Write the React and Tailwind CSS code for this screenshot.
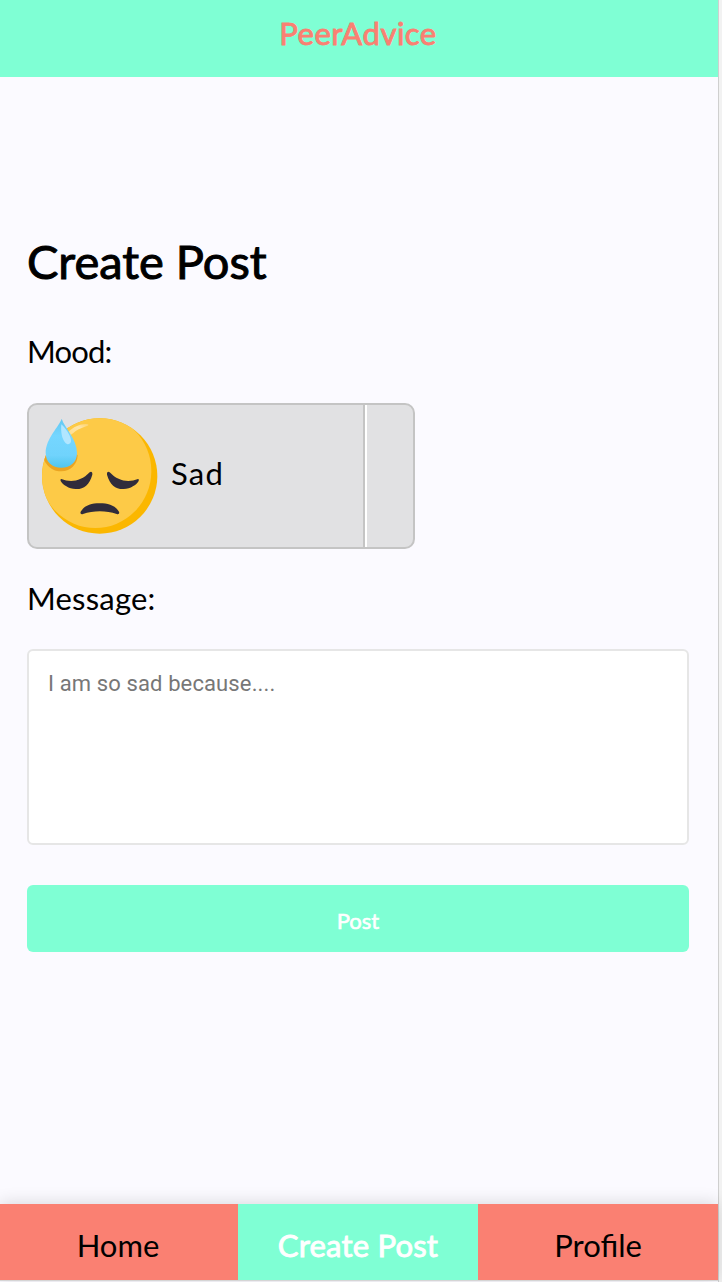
function SadFace() {
  return (
    <svg viewBox="63 66 354 354" className="size-[118px] shrink-0" aria-hidden="true">
      <defs>
        <linearGradient id="drop" x1="0" y1="0" x2="0" y2="1">
          <stop offset="0" stopColor="#62c8f2" />
          <stop offset="0.35" stopColor="#75d6ff" />
          <stop offset="0.75" stopColor="#70d3fc" />
          <stop offset="1" stopColor="#50c6ed" />
        </linearGradient>
        <linearGradient id="shine" x1="0" y1="1" x2="1" y2="0">
          <stop offset="0" stopColor="#fedb87" />
          <stop offset="0.6" stopColor="#fee5a9" />
          <stop offset="1" stopColor="#fdd26a" />
        </linearGradient>
        <clipPath id="face">
          <circle cx="239" cy="243" r="173" />
        </clipPath>
      </defs>
      <circle cx="239" cy="243" r="173" fill="#fbb700" />
      <g clipPath="url(#face)">
        <ellipse cx="226" cy="228" rx="168" ry="171" fill="#fdca47" />
        <path d="M66 176C76 218 103 229 124 229C153 229 172 207 173 181L120 130Z" fill="#eba421" />
      </g>
      <path d="M145 111C161 94 188 84 204 88C210 91 197 95 187 98C171 103 162 112 151 121Z" fill="url(#shine)" />
      <path d="M125 71C118 94 77 130 77 174C77 202 97 218 124 218C151 218 171 202 171 174C171 132 133 97 125 71Z" fill="url(#drop)" />
      <path d="M124 88C136 99 151 119 153 136C154 148 143 151 136 143C125 132 122 108 124 88Z" fill="#b2e6ff" />
      <path d="M124 252C151 263 183 260 209 232C214 228 218 232 217 239C208 270 191 283 167 282C146 281 129 270 122 258C121 254 122 251 124 252Z" fill="#302c3b" />
      <path d="M354 252C327 263 295 260 269 232C264 228 260 232 261 239C270 270 287 283 311 282C332 281 349 270 356 258C357 254 356 251 354 252Z" fill="#302c3b" />
      <path d="M182 350C193 332 213 325 239 325C265 325 286 332 297 350C299 356 296 359 290 357C259 346 220 346 189 357C183 359 180 356 182 350Z" fill="#302c3b" />
    </svg>
  );
}

export default function App() {
  return (
    <div className="flex h-[1282px] w-[722px] overflow-hidden bg-[#f2f2f2] font-['Lato',sans-serif] text-black">
      <div className="flex w-[719px] flex-col border-r border-[#cfcfcf] bg-[#fbfaff]">
        <header className="flex h-[77px] shrink-0 justify-center bg-[#7fffd4] pt-[13px] pr-0.5">
          <h1 className="h-10 text-[31px] leading-10 tracking-[0.5px] text-[#fa8072] [-webkit-text-stroke:0.9px_#fa8072]">PeerAdvice</h1>
        </header>
        <main className="flex grow flex-col pt-[154px] pr-[29px] pl-[27px]">
          <h2 className="h-[60px] text-[47px] leading-[60px] [-webkit-text-stroke:1px_black]">Create Post</h2>
          <label className="mt-10 h-10 text-[31px] leading-10 tracking-[-0.8px]">Mood:</label>
          <button className="mt-8 flex h-[146px] w-[388px] rounded-[10px] border-2 border-[#c4c4c4] bg-[#e1e1e3] text-left">
            <span className="flex h-full w-[336px] items-center gap-[12px] border-r-2 border-[#c4c4c4] pl-3">
              <SadFace />
              <span className="-mt-[7px] text-[31px] leading-10 tracking-[1.2px]">Sad</span>
            </span>
            <span className="h-full grow rounded-r-lg border-l-2 border-white" />
          </button>
          <label className="mt-[29px] h-10 text-[31px] leading-10 tracking-[0.2px]">Message:</label>
          <textarea
            className="mt-[31px] h-[196px] resize-none rounded-md border-2 border-[#e6e6e6] bg-white px-[19px] py-[19px] font-['Roboto',sans-serif] text-[22px] leading-7 tracking-[0.12px] placeholder:text-[#777777]"
            placeholder="I am so sad because...."
          />
          <button className="mt-10 h-[67px] rounded-md bg-[#7fffd4] pt-1 text-[22px] leading-7 text-white [-webkit-text-stroke:0.6px_white]">Post</button>
        </main>
        <nav className="mb-[1px] flex h-[77px] shrink-0 border-b border-[#d5d5d5] text-[31px] leading-10 shadow-[0_-1px_16px_rgba(0,0,0,0.14)]">
          <a className="w-[238px] bg-[#fa8072] pt-[21px] pr-0.5 text-center">Home</a>
          <a className="w-[240px] bg-[#7fffd4] pt-[21px] text-center tracking-[0.2px] text-white [-webkit-text-stroke:0.9px_white]">Create Post</a>
          <a className="w-[240px] bg-[#fa8072] pt-[21px] text-center">Profile</a>
        </nav>
      </div>
    </div>
  );
}
